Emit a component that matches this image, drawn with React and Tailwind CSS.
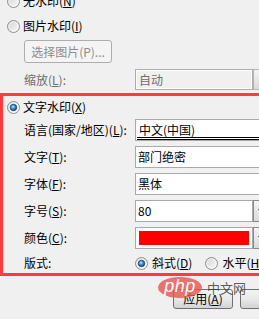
import React from "react";

function Radio({ checked }) {
  return (
    <svg width="13" height="13" viewBox="0 0 13 13" className="shrink-0">
      <defs>
        <linearGradient id="rgray" x1="0" y1="0" x2="1" y2="1">
          <stop offset="0" stopColor="#d2d2d2" />
          <stop offset="1" stopColor="#fbfbfb" />
        </linearGradient>
        <radialGradient id="rblue" cx="0.42" cy="0.38" r="0.65">
          <stop offset="0" stopColor="#c4ecff" />
          <stop offset="0.45" stopColor="#3d92da" />
          <stop offset="1" stopColor="#16467c" />
        </radialGradient>
      </defs>
      <circle cx="6.5" cy="6.5" r="6" fill="url(#rgray)" stroke="#8e8f8f" />
      <circle cx="6.5" cy="6.5" r="4.6" fill="none" stroke="#ffffff" strokeOpacity="0.6" />
      {checked && (
        <circle cx="6.5" cy="6.5" r="3.2" fill="url(#rblue)" stroke="#1b3c63" strokeWidth="0.8" />
      )}
    </svg>
  );
}

function SideButton({ disabled }) {
  return (
    <div
      className={
        "w-[17px] h-full shrink-0 border flex items-center justify-center bg-linear-to-b from-[#f3f3f3] to-[#dadada] " +
        (disabled ? "border-[#b5b5b5]" : "border-[#8a8a8a]")
      }
    >
      {disabled ? (
        <div className="w-[5px] h-[1px] bg-[#9a9a9a]" />
      ) : (
        <svg width="7" height="4" viewBox="0 0 7 4">
          <path d="M0 0 L7 0 L3.5 4 Z" fill="#000" />
        </svg>
      )}
    </div>
  );
}

function Label({ children }) {
  return <div className="w-[132px] shrink-0 pl-[21px] flex items-center">{children}</div>;
}

export default function App() {
  return (
    <div className="w-[259px] h-[319px] overflow-hidden bg-[#f0f0f0] relative font-['Noto_Sans_CJK_SC','Noto_Sans',sans-serif] text-[12px] text-black leading-none">
      <div className="w-[300px]">
        {/* 无水印 */}
        <div className="flex items-center h-[20px] -mt-[9px] pl-[7px] gap-[3px]">
          <Radio />
          <span>
            无水印(<u>N</u>)
          </span>
        </div>
        {/* 图片水印 */}
        <div className="flex items-center h-[20px] mt-[5px] pl-[7px] gap-[3px]">
          <Radio />
          <span>
            图片水印(<u>I</u>)
          </span>
        </div>
        {/* 选择图片 */}
        <div className="mt-[4px] ml-[24px] w-[88px] h-[23px] rounded-[3px] border border-[#adadad] bg-[#f4f4f4] flex items-center justify-center text-[#8d8d8d]">
          选择图片(P)...
        </div>
        {/* 缩放 */}
        <div className="flex h-[21px] mt-[6px]">
          <div className="w-[135px] shrink-0 pl-[24px] flex items-center text-[#6d6d6d]">
            缩放(<u>L</u>):
          </div>
          <div className="w-[118px] h-full border border-[#adadad] shadow-[inset_0_0_0_1px_#ffffff] bg-[#f0f0f0] flex items-center pl-[3px] text-[#6d6d6d]">
            自动
          </div>
          <SideButton disabled />
        </div>

        {/* red box */}
        <div className="mt-[3px] border-[3px] border-[#ff3b3b] w-[290px]">
          <div className="flex items-center h-[20px] mt-[1px] pl-[4px] gap-[3px]">
            <Radio checked />
            <span>
              文字水印(<u>X</u>)
            </span>
          </div>

          <div className="flex h-[22px] mt-[2px]">
            <Label>
              语言(国家/地区)(<u>L</u>):
            </Label>
            <div className="relative w-[140px] h-full border border-[#a9a9a9] bg-white flex items-center pl-[3px]">
              <span className="-mt-[1px]">中文(中国)</span>
              <div className="absolute left-[1px] right-0 bottom-0 h-[3px] border-y border-black" />
            </div>
          </div>

          <div className="flex h-[22px] mt-[5px]">
            <Label>
              文字(<u>T</u>):
            </Label>
            <div className="w-[140px] h-full border border-[#a9a9a9] bg-white flex items-center pl-[2px]">
              部门绝密
            </div>
          </div>

          <div className="flex h-[22px] mt-[5px]">
            <Label>
              字体(<u>F</u>):
            </Label>
            <div className="w-[140px] h-full border border-[#a9a9a9] bg-white flex items-center pl-[2px]">
              黑体
            </div>
          </div>

          <div className="flex h-[22px] mt-[5px]">
            <Label>
              字号(<u>S</u>):
            </Label>
            <div className="w-[118px] h-full border border-[#a9a9a9] bg-white flex items-center pl-[2px]">
              80
            </div>
            <SideButton />
          </div>

          <div className="flex h-[22px] mt-[5px]">
            <Label>
              颜色(<u>C</u>):
            </Label>
            <div className="w-[118px] h-full border border-[#a9a9a9] bg-white p-[3px]">
              <div className="w-full h-full bg-[#ff0000]" />
            </div>
            <SideButton />
          </div>

          <div className="flex h-[20px] mt-[4px]">
            <Label>版式:</Label>
            <div className="flex items-center gap-[4px]">
              <Radio checked />
              <span>
                斜式(<u>D</u>)
              </span>
            </div>
            <div className="flex items-center gap-[4px] ml-[13px]">
              <Radio />
              <span>
                水平(<u>H</u>)
              </span>
            </div>
          </div>
        </div>

        {/* buttons */}
        <div className="flex mt-[13px] pl-[173px] gap-[7px] h-[20px]">
          <div className="w-[73px] h-full rounded-[3px] border border-[#707070] bg-linear-to-b from-[#f4f4f4] via-[#e9e9e9] to-[#d3d3d3] flex items-center justify-center">
            应用(<u>A</u>)
          </div>
          <div className="w-[73px] h-full rounded-[3px] border border-[#707070] bg-linear-to-b from-[#f4f4f4] via-[#e9e9e9] to-[#d3d3d3]" />
        </div>
      </div>

      {/* php watermark overlay */}
      <div className="absolute left-[158px] top-[277px] w-[44px] h-[21px] rounded-[50%] bg-[#e6534e]/80 flex items-center justify-center">
        <span className="text-white italic text-[18px] font-['Liberation_Sans',sans-serif] -mt-[3px] tracking-[0.5px]">php</span>
      </div>
      <div className="absolute left-[207px] top-[281px] text-[13px] text-[#333333]/80 font-['Noto_Sans_CJK_SC',sans-serif]">
        中文网
      </div>
    </div>
  );
}
